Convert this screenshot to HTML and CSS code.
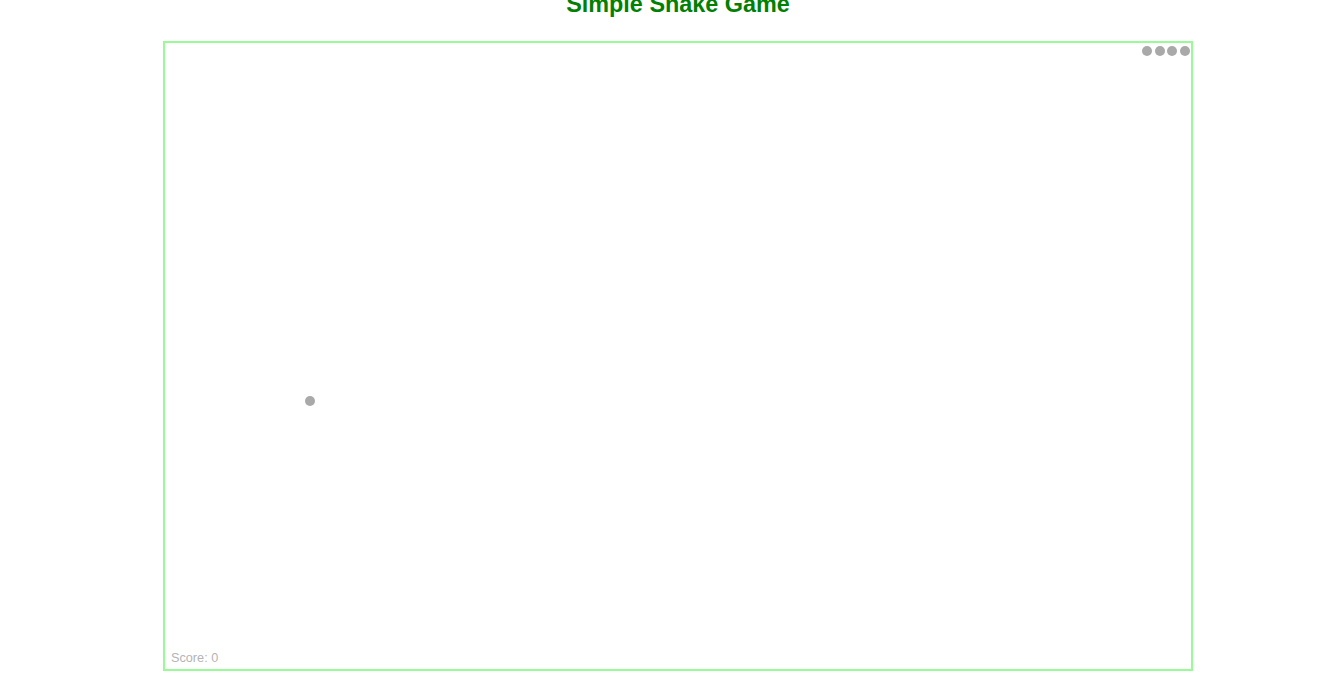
FILE: index.html
```html
<!DOCTYPE html>
<html lang="en">
<head>
<meta charset="utf-8">
<title>Simple Snake Game</title>
<link rel="stylesheet" href="styles.css">
</head>
<body>
<div class="page">
  <h1 class="title">Simple Snake Game</h1>
  <div class="board">
    <span class="dot" style="left:976px;top:1.5px"></span>
    <span class="dot" style="left:988.5px;top:1.5px"></span>
    <span class="dot" style="left:1001px;top:1.5px"></span>
    <span class="dot" style="left:1013.5px;top:1.5px"></span>
    <span class="dot" style="left:138.5px;top:351.5px"></span>
    <div class="score">Score: 0</div>
  </div>
</div>
</body>
</html>
```
FILE: styles.css
```css
html, body {
  margin: 0;
  padding: 0;
  background: #ffffff;
  overflow: hidden;
}
.page {
  width: 1030px;
  margin-left: 163px;
  font-family: "Liberation Sans", Arial, sans-serif;
}
.title {
  margin: -10px 0 23px 0;
  font-size: 23.4px;
  line-height: 28px;
  font-weight: bold;
  color: #008000;
  text-align: center;
}
.board {
  position: relative;
  width: 1026px;
  height: 626px;
  border: 2px solid #98fb98;
  background: #ffffff;
}
.dot {
  position: absolute;
  width: 12.5px;
  height: 12.5px;
  display: flex;
  align-items: center;
  justify-content: center;
}
.dot::before {
  content: "";
  width: 10px;
  height: 10px;
  border-radius: 50%;
  background: #a9a9a9;
}
.score {
  position: absolute;
  left: 6px;
  bottom: 3px;
  font-size: 12.7px;
  line-height: 16px;
  color: #b4b4b4;
}
```
